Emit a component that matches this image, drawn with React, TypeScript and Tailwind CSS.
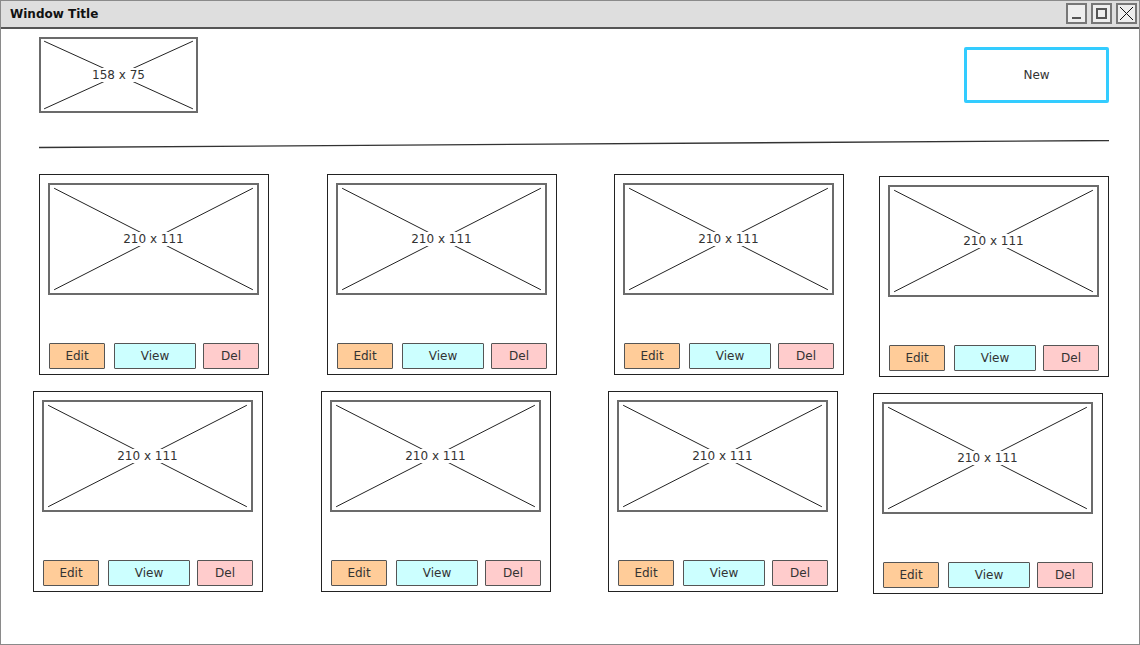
import React from 'react';

const font = { fontFamily: '"DejaVu Sans", "Liberation Sans", sans-serif' };

const Placeholder: React.FC<{ label: string; className?: string }> = ({ label, className = '' }) => (
  <div className={`relative border-2 border-[#6b6b6b] bg-white flex items-center justify-center ${className}`}>
    <svg className="absolute inset-0 w-full h-full" preserveAspectRatio="none" viewBox="0 0 100 100">
      <line x1="2" y1="3" x2="98" y2="97" stroke="#222" strokeWidth="1" vectorEffect="non-scaling-stroke" />
      <line x1="98" y1="3" x2="2" y2="97" stroke="#222" strokeWidth="1" vectorEffect="non-scaling-stroke" />
    </svg>
    <span className="relative bg-white px-[3px] text-[12px] leading-[14px] text-[#333]">{label}</span>
  </div>
);

const Card: React.FC<{ className?: string }> = ({ className = '' }) => (
  <div className={`w-[230px] h-[201px] border border-[#222] bg-white flex flex-col justify-between pt-[8px] pb-[5px] pl-[8px] ${className}`}>
    <Placeholder label="210 x 111" className="w-[211px] h-[112px]" />
    <div className="flex pl-[1px] text-[12px] text-[#333]">
      <button className="w-[56px] h-[26px] bg-[#ffcc99] border border-[#555] rounded-[1px]">Edit</button>
      <button className="ml-[9px] w-[82px] h-[26px] bg-[#ccffff] border border-[#555] rounded-[1px]">View</button>
      <button className="ml-[7px] w-[56px] h-[26px] bg-[#ffcccc] border border-[#555] rounded-[1px]">Del</button>
    </div>
  </div>
);

export default function App() {
  return (
    <div className="w-[1140px] h-[645px] bg-white border border-[#8a8a8a] flex flex-col overflow-hidden" style={font}>
      {/* title bar */}
      <div className="h-[28px] shrink-0 bg-[#dedede] border-b-2 border-[#555] flex items-center justify-between pl-[9px] pr-[2px]">
        <span className="text-[12px] font-bold text-[#111]">Window Title</span>
        <div className="flex gap-[4px] pb-[1px]">
          <div className="w-[21px] h-[21px] border-2 border-[#777] bg-[#eee] flex items-end justify-center pb-[3px]">
            <div className="w-[9px] h-[2px] bg-[#555]" />
          </div>
          <div className="w-[21px] h-[21px] border-2 border-[#777] bg-[#eee] flex items-center justify-center">
            <div className="w-[11px] h-[11px] border-2 border-[#555]" />
          </div>
          <div className="w-[21px] h-[21px] border-2 border-[#777] bg-[#eee] flex items-center justify-center">
            <svg width="15" height="15" viewBox="0 0 15 15">
              <path d="M1 1L14 14M14 1L1 14" stroke="#111" strokeWidth="1" />
            </svg>
          </div>
        </div>
      </div>

      {/* header */}
      <div className="flex justify-between items-start pl-[38px] pr-[30px] pt-[8px]">
        <Placeholder label="158 x 75" className="w-[159px] h-[76px]" />
        <button className="mt-[10px] w-[145px] h-[56px] border-[3px] border-[#33ccff] rounded-[2px] bg-white text-[12px] text-[#333]">
          New
        </button>
      </div>

      {/* divider */}
      <svg className="ml-[38px] mt-[27px] block" width="1070" height="9" viewBox="0 0 1070 9">
        <line x1="0" y1="7.5" x2="1070" y2="0.5" stroke="#333" strokeWidth="1.3" />
      </svg>

      {/* cards */}
      <div className="flex items-start pl-[38px] mt-[25px]">
        <Card />
        <Card className="ml-[58px]" />
        <Card className="ml-[57px]" />
        <Card className="ml-[35px] mt-[2px]" />
      </div>
      <div className="flex items-start pl-[32px] mt-[14px]">
        <Card />
        <Card className="ml-[58px]" />
        <Card className="ml-[57px]" />
        <Card className="ml-[35px] mt-[2px]" />
      </div>
    </div>
  );
}
